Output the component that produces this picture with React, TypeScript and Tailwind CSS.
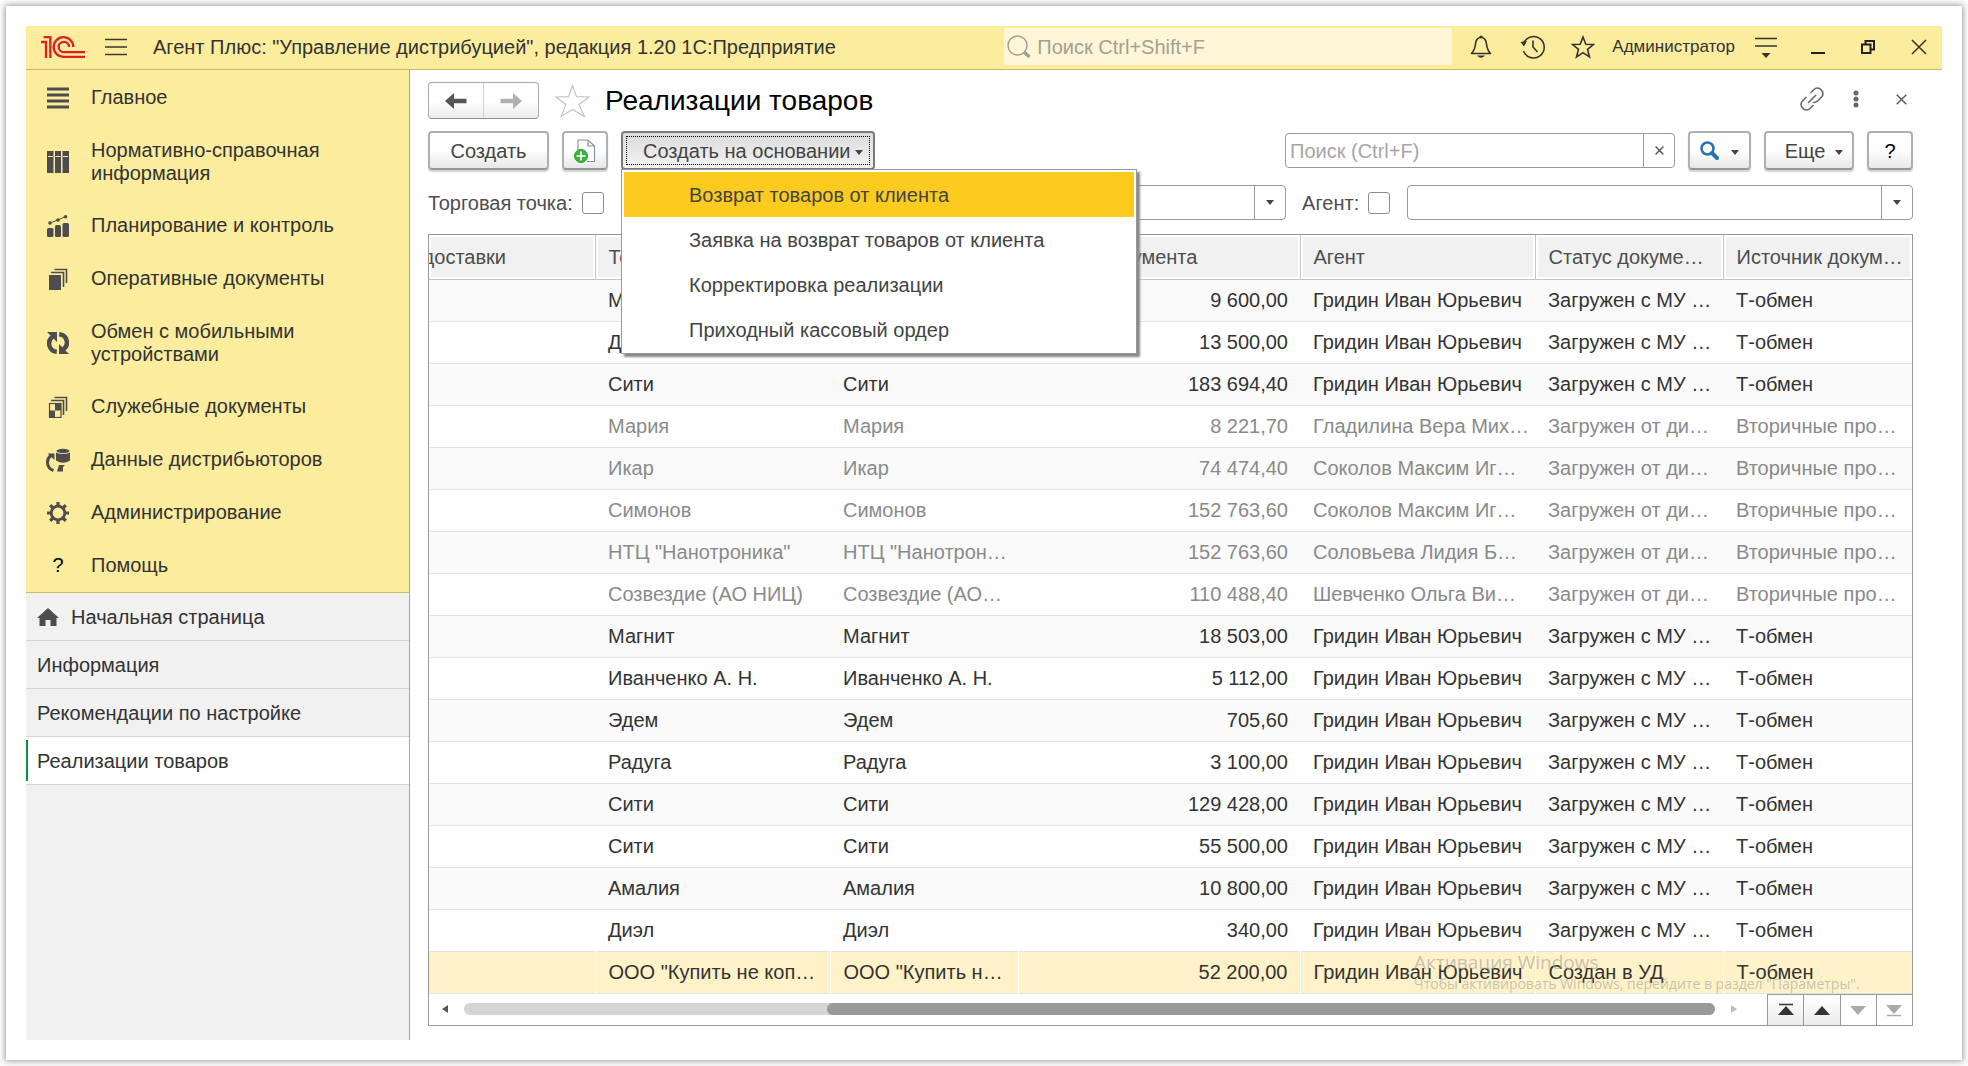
import React from "react";

type IconProps = { children: React.ReactNode; w?: number; h?: number; vb: string; className?: string };

function Svg({ children, w = 22, h = 22, vb, className = "" }: IconProps) {
  return (
    <svg width={w} height={h} viewBox={vb} fill="none" className={`shrink-0 ${className}`} aria-hidden="true">
      {children}
    </svg>
  );
}

const INK = "#4d4d4d";

const Logo = () => (
  <Svg w={44} h={22} vb="0 0 132 66">
    <g stroke="#e01e26" strokeWidth="7">
      <path d="M8 3.5H28V66" />
      <path d="M0 18H15V66" />
      <path d="M97 33A29.5 29.5 0 1 0 68 62.5H132" />
      <path d="M84 33A15.5 15.5 0 1 0 68 48.500H132" />
    </g>
  </Svg>
);

const Burger = () => (
  <Svg vb="0 0 22 22">
    <path d="M0 3.500H22M0 11H22M0 18.500H22" stroke="#3c3a2c" strokeWidth="1.500" />
  </Svg>
);

const MainIcon = () => (
  <Svg vb="0 0 22 22">
    <path d="M0 2H22M0 8H22M0 14H22M0 20H22" stroke={INK} strokeWidth="3" />
  </Svg>
);

const BindersIcon = () => (
  <Svg vb="0 0 22 22">
    <path d="M0 0H6.500V22H0ZM8 0H14V22H8ZM15.500 0H22V22H15.500Z" fill={INK} />
    <path d="M1 5.500H6M8.500 5.500H13.500M16 5.500H21" stroke="#fbec9e" />
  </Svg>
);

const ChartIcon = () => (
  <Svg vb="0 0 22 22">
    <rect x="0" y="13" width="6.500" height="9" rx="1.500" fill={INK} />
    <rect x="8" y="10" width="6" height="12" rx="1.500" fill={INK} />
    <rect x="15.500" y="8" width="6.500" height="14" rx="1.500" fill={INK} />
    <path d="M3 8L11 5L18.500 1.500" stroke={INK} />
    <circle cx="3" cy="8" r="1.800" fill={INK} />
    <circle cx="11" cy="5" r="1.800" fill={INK} />
    <circle cx="18.500" cy="1.800" r="1.800" fill={INK} />
  </Svg>
);

const DocsIcon = () => (
  <Svg vb="0 0 22 22">
    <rect x="2" y="7" width="12" height="15" fill={INK} />
    <path d="M4 4.500H16.500V19M7.500 1.500H19.500V15" stroke={INK} strokeWidth="1.600" />
  </Svg>
);

const ServiceDocsIcon = () => (
  <Svg vb="0 0 22 22">
    <rect x="2.500" y="7.500" width="11.500" height="14" stroke={INK} strokeWidth="1.200" />
    <path d="M8 7.500H14V14.500H8ZM2.500 14.500H8V21.500H2.500Z" fill={INK} />
    <path d="M4 4.500H16.500V19M7.500 1.500H19.500V15" stroke={INK} strokeWidth="1.600" />
  </Svg>
);

const ExchangeIcon = () => (
  <Svg vb="0 0 22 22">
    <path d="M6 4.500A8.300 8.300 0 0 0 9.800 19.800" stroke={INK} strokeWidth="4.400" />
    <path d="M0 0H10V10Z" fill={INK} />
    <path d="M16 17.500A8.300 8.300 0 0 0 12.200 2.200" stroke={INK} strokeWidth="4.400" />
    <path d="M22 22H12V12Z" fill={INK} />
  </Svg>
);

const DistributorIcon = () => (
  <Svg w={24} h={24} vb="0 0 24 24">
    <ellipse cx="17" cy="3" rx="6.500" ry="2.200" fill={INK} />
    <path d="M10 4.500Q17 7.500 24 4.500V12.500Q17 17 10 12.500Z" fill={INK} />
    <path d="M7.500 22.500C0 20 0 11 5 7.500" stroke={INK} strokeWidth="3" />
    <path d="M1.500 5.500H8.500V12Z" fill={INK} />
    <path d="M17 23.500L11 23.500L13 17H19L17 19Z" fill={INK} />
  </Svg>
);

const GearIcon = () => (
  <Svg vb="0 0 22 22">
    <circle cx="11" cy="11" r="6.800" stroke={INK} strokeWidth="2.800" />
    <path
      d="M11 0V4M11 18V22M0 11H4M18 11H22M3.200 3.200L6 6M16 16L18.800 18.800M3.200 18.800L6 16M16 6L18.800 3.200"
      stroke={INK}
      strokeWidth="3.200"
    />
  </Svg>
);

const HomeIcon = () => (
  <Svg w={22} h={20} vb="0 0 22 20">
    <path d="M11 1L22 11H19.500V19H13.500V13H8.500V19H2.500V11H0Z" fill={INK} />
  </Svg>
);

const Caret = ({ className = "" }: { className?: string }) => (
  <Svg w={8} h={5} vb="0 0 8 5" className={className}>
    <path d="M0 0H8L4 5Z" fill="#444" />
  </Svg>
);

const Cross = ({ size, color, sw = 1.5 }: { size: number; color: string; sw?: number }) => (
  <Svg w={size} h={size} vb="0 0 16 16">
    <path d="M1 1L15 15M15 1L1 15" stroke={color} strokeWidth={sw} />
  </Svg>
);

const sections: { label: string; icon: React.ReactNode; tall?: boolean }[] = [
  { label: "Главное", icon: <MainIcon /> },
  { label: "Нормативно-справочная информация", icon: <BindersIcon />, tall: true },
  { label: "Планирование и контроль", icon: <ChartIcon /> },
  { label: "Оперативные документы", icon: <DocsIcon /> },
  { label: "Обмен с мобильными устройствами", icon: <ExchangeIcon />, tall: true },
  { label: "Служебные документы", icon: <ServiceDocsIcon /> },
  { label: "Данные дистрибьюторов", icon: <DistributorIcon /> },
  { label: "Администрирование", icon: <GearIcon /> },
  { label: "Помощь", icon: <span className="text-black">?</span> },
];

const tabs = ["Начальная страница", "Информация", "Рекомендации по настройке", "Реализации товаров"];

const actions = [
  "Возврат товаров от клиента",
  "Заявка на возврат товаров от клиента",
  "Корректировка реализации",
  "Приходный кассовый ордер",
];

const G = "Гридин Иван Юрьевич";
const MU = "Загружен с МУ …";
const DI = "Загружен от ди…";
const T = "Т-обмен";
const V = "Вторичные про…";

const rows: string[][] = [
  ["Мария", "Мария", "9 600,00", G, MU, T],
  ["Диэл", "Диэл", "13 500,00", G, MU, T],
  ["Сити", "Сити", "183 694,40", G, MU, T],
  ["Мария", "Мария", "8 221,70", "Гладилина Вера Мих…", DI, V],
  ["Икар", "Икар", "74 474,40", "Соколов Максим Иг…", DI, V],
  ["Симонов", "Симонов", "152 763,60", "Соколов Максим Иг…", DI, V],
  ['НТЦ "Нанотроника"', 'НТЦ "Нанотрон…', "152 763,60", "Соловьева Лидия Б…", DI, V],
  ["Созвездие (АО НИЦ)", "Созвездие (АО…", "110 488,40", "Шевченко Ольга Ви…", DI, V],
  ["Магнит", "Магнит", "18 503,00", G, MU, T],
  ["Иванченко А. Н.", "Иванченко А. Н.", "5 112,00", G, MU, T],
  ["Эдем", "Эдем", "705,60", G, MU, T],
  ["Радуга", "Радуга", "3 100,00", G, MU, T],
  ["Сити", "Сити", "129 428,00", G, MU, T],
  ["Сити", "Сити", "55 500,00", G, MU, T],
  ["Амалия", "Амалия", "10 800,00", G, MU, T],
  ["Диэл", "Диэл", "340,00", G, MU, T],
  ['ООО "Купить не коп…', 'ООО "Купить н…', "52 200,00", G, "Создан в УД", T],
];

const headers = ["Торговая точка", "Контрагент", "Сумма документа", "Агент", "Статус докуме…", "Источник докум…"];

const button =
  "flex items-center justify-center rounded-[4px] border-2 border-[#b0b0b0] border-b-[#989898] bg-linear-to-b from-white from-50% to-[#e8e8e8] text-[#444] shadow-[0_2px_1px_#d4d4d4]";
const field = "flex h-[35px] overflow-hidden rounded-[4px] border border-[#999] bg-white";
const check = "size-[22px] shrink-0 appearance-none rounded-[3px] border border-[#8c8c8c] bg-white";

function TopBar() {
  return (
    <header className="flex h-11 shrink-0 items-center border-b border-[#c8b964] bg-[#fbec9e] pb-0.5 pl-[15px] text-[#333]">
      <Logo />
      <button aria-label="Меню" className="ml-5">
        <Burger />
      </button>
      <h1 className="ml-[26px] flex-1 whitespace-nowrap">
        Агент Плюс: "Управление дистрибуцией", редакция 1.20 1С:Предприятие
      </h1>
      <label className="flex h-[37px] w-[448px] items-center gap-1.5 rounded-[3px] bg-[#fef6d6] pl-[3px]">
        <Svg w={24} h={24} vb="0 0 24 24">
          <circle cx="10.500" cy="10.500" r="9.500" stroke="#a3a094" strokeWidth="1.500" />
          <path d="M17 17L22.500 22" stroke="#a3a094" strokeWidth="3.500" />
        </Svg>
        <input
          aria-label="Глобальный поиск"
          placeholder="Поиск Ctrl+Shift+F"
          className="min-w-0 flex-1 bg-transparent outline-none placeholder:text-[#a3a094]"
        />
      </label>
      <button aria-label="Оповещения" className="ml-[18px]">
        <Svg w={22} h={24} vb="0 0 22 24">
          <path
            d="M1.500 18.500C4 16 5 13 5.500 9C6 4.500 8 2.500 11 2.500S16 4.500 16.500 9C17 13 18 16 20.500 18.500Z"
            stroke="#333"
            strokeWidth="1.600"
            strokeLinejoin="round"
          />
          <path d="M9 2Q11 -1 13 2ZM7 20.500H15Q11 25 7 20.500Z" fill="#333" />
        </Svg>
      </button>
      <button aria-label="История" className="ml-7">
        <Svg w={26} h={24} vb="0 0 26 24">
          <path d="M3.500 8.500A10.700 10.700 0 1 1 3.500 16" stroke="#333" strokeWidth="1.600" />
          <path d="M0.500 7L7 6L4 11.500Z" fill="#333" />
          <path d="M13 5.500V12L17.500 17" stroke="#333" strokeWidth="1.600" />
        </Svg>
      </button>
      <button aria-label="Избранное" className="ml-[25px]">
        <Svg w={24} h={24} vb="0 0 24 24">
          <path
            d="M12 2L14.800 9.200L22.500 9.500L16.500 14.400L18.500 22L12 17.700L5.500 22L7.500 14.400L1.500 9.500L9.200 9.200Z"
            stroke="#333"
            strokeWidth="1.600"
          />
        </Svg>
      </button>
      <a href="#user" className="ml-[17px] text-[17px]">
        Администратор
      </a>
      <button aria-label="Настройки" className="ml-5">
        <Svg w={22} h={22} vb="0 0 22 22">
          <path d="M0 2.500H22M0 10H22" stroke="#333" strokeWidth="1.600" />
          <path d="M6.500 17H15.500L11 22Z" fill="#333" />
        </Svg>
      </button>
      <button aria-label="Свернуть" className="ml-[34px]">
        <Svg w={14} h={14} vb="0 0 14 14">
          <path d="M0 13H14" stroke="#222" strokeWidth="2" />
        </Svg>
      </button>
      <button aria-label="Восстановить" className="ml-9">
        <Svg w={14} h={14} vb="0 0 14 14">
          <path d="M1 4.500H9.500V13H1ZM4.500 4V1H13V9.500H10" stroke="#222" strokeWidth="2" />
        </Svg>
      </button>
      <button aria-label="Закрыть" className="mr-[15px] ml-9">
        <Cross size={16} color="#333" />
      </button>
    </header>
  );
}

function Sidebar() {
  return (
    <aside className="flex w-[384px] shrink-0 flex-col border-r border-[#b9ab5c] bg-[#f1f1f1] text-[#333]">
      <nav className="border-b border-[#cdb870] bg-[#fbec9e] pt-px">
        {sections.map((s) => (
          <a
            key={s.label}
            href="#section"
            className={`flex items-center pl-5 leading-[23px] ${s.tall ? "h-[75px]" : "h-[53px]"}`}
          >
            <span className="flex w-6 shrink-0 justify-center">{s.icon}</span>
            <span className="ml-[21px] w-[250px]">{s.label}</span>
          </a>
        ))}
      </nav>
      {tabs.map((t, i) => (
        <a
          key={t}
          href="#tab"
          className={`flex h-12 items-center border-b border-[#d6d6d6] ${i === 3 ? "bg-white" : ""}`}
        >
          {i === 3 && <span className="h-[41px] w-0.5 bg-[#009646]" />}
          <span className={`flex items-center gap-3 ${i === 3 ? "pl-[9px]" : "pl-[11px]"}`}>
            {i === 0 && <HomeIcon />}
            {t}
          </span>
        </a>
      ))}
    </aside>
  );
}

function ComboBox({ label, className }: { label: string; className: string }) {
  return (
    <div className={`${field} ${className}`}>
      <input aria-label={label} className="min-w-0 flex-1 px-2 outline-none" />
      <button aria-label={`${label}: выбрать`} className="flex w-[31px] items-center justify-center border-l border-[#999]">
        <Caret />
      </button>
    </div>
  );
}

function ActionMenu() {
  return (
    <div
      role="menu"
      className="absolute top-[38px] left-0 z-20 w-[516px] border border-[#999] bg-white px-0.5 pt-0.5 pb-px shadow-[3px_3px_2px_#888]"
    >
      {actions.map((a, i) => (
        <button
          key={a}
          role="menuitem"
          className={`flex h-[45px] w-full items-center pl-[65px] whitespace-nowrap ${i === 0 ? "bg-[#fbcb20]" : ""}`}
        >
          {a}
        </button>
      ))}
    </div>
  );
}

function Toolbar() {
  return (
    <div className="mt-3 flex h-[39px] items-stretch">
      <button className={`${button} w-[121px]`}>Создать</button>
      <button aria-label="Создать копированием" className={`${button} ml-[13px] w-[46px]`}>
        <Svg w={22} h={24} vb="0 0 22 24">
          <path d="M4 12V1H14L20.500 7V22.500H13" fill="#fff" stroke="#8290a0" strokeWidth="1.200" />
          <path d="M14 1V7H20.500" stroke="#8290a0" strokeWidth="1.200" />
          <circle cx="7" cy="17" r="6.500" fill="#3cb43c" stroke="#2a9a35" />
          <path d="M7 12.500V21.500M2.500 17H11.500" stroke="#fff" strokeWidth="1.600" />
        </Svg>
      </button>
      <div className="relative ml-[13px] flex w-[254px] text-[#444]">
        <button
          aria-haspopup="menu"
          aria-expanded="true"
          className="flex flex-1 rounded-[4px] border-2 border-[#7a7a7a] bg-linear-to-b from-[#dcdcdc] to-[#f2f2f2] p-[3px]"
        >
          <span className="flex h-full flex-1 items-center justify-between border border-dotted border-black pr-1.5 pl-4 whitespace-nowrap">
            Создать на основании
            <Caret className="mt-1" />
          </span>
        </button>
        <ActionMenu />
      </div>
      <div className="flex-1" />
      <div className={`${field} w-[390px] self-center`}>
        <input
          aria-label="Поиск"
          placeholder="Поиск (Ctrl+F)"
          className="min-w-0 flex-1 px-1 outline-none placeholder:text-[#a6a6a6]"
        />
        <button aria-label="Очистить" className="flex w-[31px] items-center justify-center border-l border-[#999]">
          <Cross size={9} color="#555" sw={2.5} />
        </button>
      </div>
      <button aria-label="Найти" className={`${button} ml-[13px] w-[63px] gap-3`}>
        <Svg w={19} h={19} vb="0 0 19 19">
          <circle cx="7.500" cy="7.500" r="6" stroke="#2673b0" strokeWidth="2.500" />
          <path d="M12 12L17 17" stroke="#2673b0" strokeWidth="4" strokeLinecap="round" />
        </Svg>
        <Caret className="mt-1" />
      </button>
      <button className={`${button} ml-[13px] w-[90px] gap-2.5 pl-2.5`}>
        Еще
        <Caret className="mt-1" />
      </button>
      <button aria-label="Справка" className={`${button} ml-[13px] w-[46px] text-black`}>
        ?
      </button>
    </div>
  );
}

function DocumentTable() {
  return (
    <section className="relative mt-[14px] flex flex-1 flex-col border border-[#999] text-[#333]">
      <table className="w-full table-fixed border-collapse">
        <colgroup>
          <col className="w-[166px]" />
          <col className="w-[235px]" />
          <col className="w-[188px]" />
          <col className="w-[282px]" />
          <col className="w-[235px]" />
          <col className="w-[188px]" />
          <col className="w-[189px]" />
        </colgroup>
        <thead>
          <tr className="h-11 border-b border-[#c6c6c6] bg-[#f1f1f1] text-left text-[#4d4d4d]">
            <th className="border-r border-[#c6c6c6] p-0 font-normal shadow-[inset_0_0_0_2px_#fff]">
              <span className="flex w-[77px] justify-end overflow-hidden">доставки</span>
            </th>
            {headers.map((h, i) => (
              <th
                key={h}
                className={`overflow-hidden py-0 pr-0 pl-[13px] font-normal whitespace-nowrap shadow-[inset_0_0_0_2px_#fff] ${i < 5 ? "border-r border-[#c6c6c6]" : ""}`}
              >
                {h}
              </th>
            ))}
          </tr>
        </thead>
        <tbody>
          {rows.map((r, i) => {
            const selected = i === rows.length - 1;
            const muted = i > 2 && i < 8;
            return (
              <tr
                key={i}
                className={`h-[42px] border-b border-[#e4e4e4] ${selected ? "bg-[#fff2c8]" : i % 2 === 0 ? "bg-[#fafafa]" : "bg-white"} ${muted ? "text-[#8a8a8a]" : ""}`}
              >
                <td className={selected ? "border-r border-white p-0" : "p-0"} />
                {r.map((c, j) => (
                  <td
                    key={j}
                    className={`overflow-hidden py-0 pr-3 pl-[13px] whitespace-nowrap ${j === 2 ? "text-right" : ""} ${selected && j < 5 ? "border-r border-white" : ""}`}
                  >
                    {c}
                  </td>
                ))}
              </tr>
            );
          })}
        </tbody>
      </table>
      <div className="flex flex-1 items-stretch">
        <div className="flex flex-1 items-center pr-[30px] pl-[13px]">
          <button aria-label="Влево">
            <Svg w={6} h={8} vb="0 0 6 8">
              <path d="M6 0V8L0 4Z" fill="#555" />
            </Svg>
          </button>
          <div className="mx-4 flex h-3 flex-1 justify-end rounded-full bg-[#d5d5d5]">
            <div className="w-[71%] rounded-full bg-[#999]" />
          </div>
          <button aria-label="Вправо">
            <Svg w={6} h={8} vb="0 0 6 8">
              <path d="M0 0V8L6 4Z" fill="#bbb" />
            </Svg>
          </button>
        </div>
        <div className="flex w-[145px] border-t border-[#999]">
          {[
            { l: "В начало", d: "M1 1.500H15", p: "M0 12L8 3L16 12Z", c: "#333" },
            { l: "Вверх", d: "", p: "M0 12L8 3L16 12Z", c: "#333" },
            { l: "Вниз", d: "", p: "M0 3L8 12L16 3Z", c: "#aaa" },
            { l: "В конец", d: "M1 12.500H15", p: "M0 2L8 11L16 2Z", c: "#aaa" },
          ].map((b, i) => (
            <button
              key={b.l}
              aria-label={b.l}
              className={`flex flex-1 items-center justify-center border-l border-[#999] ${i < 2 ? "bg-linear-to-b from-white to-[#ececec]" : ""}`}
            >
              <Svg w={16} h={14} vb="0 0 16 14">
                <path d={b.p} fill={b.c} />
                <path d={b.d} stroke={b.c} strokeWidth="1.500" />
              </Svg>
            </button>
          ))}
        </div>
      </div>
      <div className="pointer-events-none absolute right-11 bottom-[31px] w-[454px] font-['Open_Sans','Noto_Sans',sans-serif] whitespace-nowrap text-[#a0a0a0]/60">
        <p className="text-[19px] leading-6">Активация Windows</p>
        <p className="text-[14px] leading-5">Чтобы активировать Windows, перейдите в раздел "Параметры".</p>
      </div>
    </section>
  );
}

export default function App() {
  return (
    <div className="flex min-h-screen flex-col bg-[#fdfdfd] p-1.5 font-['Liberation_Sans',Arial,sans-serif] text-[20px] leading-6">
      <div className="flex flex-1 flex-col bg-white p-5 shadow-[0_0_6px_1px_#999]">
        <TopBar />
        <div className="flex flex-1">
          <Sidebar />
          <main className="flex min-w-0 flex-1 flex-col pt-3 pr-[29px] pb-[14px] pl-[18px]">
            <div className="flex h-[37px] items-center">
              <div className="flex h-full w-[111px] rounded-[4px] border border-[#aaa] border-b-[#909090] bg-linear-to-b from-white from-50% to-[#ececec]">
                <button aria-label="Назад" className="flex flex-1 items-center justify-center border-r border-[#d0d0d0]">
                  <Svg w={22} h={16} vb="0 0 22 16">
                    <path d="M0 8L9 0V5.800H21.500V10.200H9V16Z" fill="#555" />
                  </Svg>
                </button>
                <button aria-label="Вперед" className="flex flex-1 items-center justify-center">
                  <Svg w={22} h={16} vb="0 0 22 16">
                    <path d="M22 8L13 0V5.800H0.500V10.200H13V16Z" fill="#b0b0b0" />
                  </Svg>
                </button>
              </div>
              <button aria-label="Добавить в избранное" className="ml-4">
                <Svg w={35} h={34} vb="0 0 35 34">
                  <path
                    d="M17.500 1.500L21.500 12.700L34 13L24 20.500L29.500 32.500L17.500 25.500L6 32.500L11 20.500L1 13L13.500 12.700Z"
                    stroke="#c0c4c8"
                    strokeWidth="1.200"
                  />
                </Svg>
              </button>
              <h2 className="ml-[15px] flex-1 text-[28px] leading-8 text-black">Реализации товаров</h2>
              <div className="flex items-center pb-[3px]">
                <button aria-label="Ссылка">
                  <Svg w={24} h={24} vb="0 0 24 24">
                    <g stroke="#666" strokeWidth="1.600" strokeLinecap="round">
                      <path d="M11 5.500L14 2.500C16 0.500 19 0.500 21.200 2.800C23.500 5 23.500 8 21.500 10L17.500 14C16.500 15 15 15.500 13.500 15.500" />
                      <path d="M13 18.500L10 21.500C8 23.500 5 23.500 2.800 21.200C0.500 19 0.500 16 2.500 14L6 10.500" />
                      <path d="M8.500 15.500L15.500 8.500" />
                    </g>
                  </Svg>
                </button>
                <button aria-label="Еще действия" className="ml-[29px]">
                  <Svg w={6} h={18} vb="0 0 6 18">
                    <circle cx="3" cy="3" r="2.500" fill="#666" />
                    <circle cx="3" cy="9" r="2.500" fill="#666" />
                    <circle cx="3" cy="15" r="2.500" fill="#666" />
                  </Svg>
                </button>
                <button aria-label="Закрыть страницу" className="mr-1.5 ml-[37px]">
                  <Cross size={11} color="#555" sw={2} />
                </button>
              </div>
            </div>
            <Toolbar />
            <div className="mt-[15px] flex h-[35px] items-center text-[#4d4d4d]">
              <label className="flex w-[193px] items-center gap-[9px] whitespace-nowrap">
                Торговая точка:
                <input type="checkbox" className={check} />
              </label>
              <ComboBox label="Торговая точка" className="flex-[666]" />
              <label className="mr-[17px] ml-4 flex items-center gap-[9px] whitespace-nowrap">
                Агент:
                <input type="checkbox" className={check} />
              </label>
              <ComboBox label="Агент" className="flex-[506]" />
            </div>
            <DocumentTable />
          </main>
        </div>
      </div>
    </div>
  );
}
